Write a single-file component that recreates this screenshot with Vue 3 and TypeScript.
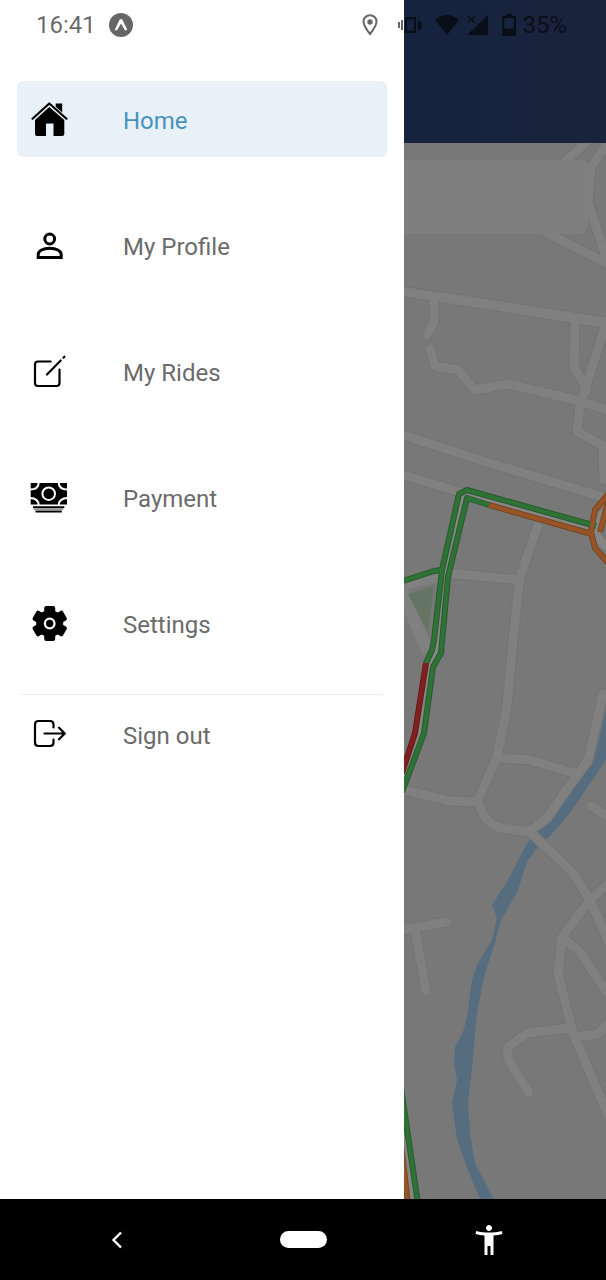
<script setup lang="ts">
import { ref } from 'vue'

type IconName = 'home' | 'profile' | 'rides' | 'payment' | 'settings'

interface MenuItem {
  icon: IconName
  label: string
}

const items: MenuItem[] = [
  { icon: 'home', label: 'Home' },
  { icon: 'profile', label: 'My Profile' },
  { icon: 'rides', label: 'My Rides' },
  { icon: 'payment', label: 'Payment' },
  { icon: 'settings', label: 'Settings' },
]

const active = ref<IconName>('home')

const roads: string[] = [
  'M592 137 560 166',
  'M610 140 591 167 588 202 607 260',
  'M545 232 610 265',
  'M400 291 610 324',
  'M434 297V322L427 335',
  'M430 349 435 366 458 370 475 390 508 384 580 401 610 411',
  'M575 322 574 367 587 390',
  'M605 327 588 380 580 405 577 431 603 446 604 480',
  'M400 434 483 461 606 498',
  'M400 474 460 492',
  'M538 525 520 577 513 640 507 707 497 757 478 800Q484 825 502 828L528 832',
  'M446 573 520 580',
  'M500 758 530 760 577 774',
  'M603 694 588 760 565 792 547 818 528 832',
  'M400 789 450 801 478 802',
  'M528 830 573 873 590 900 610 945',
  'M591 806 610 818',
  'M610 882 590 900 562 937 558 973 573 1033 610 1120',
  'M565 940 580 952 610 997',
  'M570 1028 527 1033 507 1048 509 1061 529 1093',
  'M577 1037 597 1034 610 1022',
  'M400 930 447 922',
  'M415 930 426 991',
]

const greens: string[] = [
  'M400 582 434 571 442 570',
  'M426 663 432 650 434 640 442 570 459 494 467 490 596 526',
  'M402 792 424 733 433 667 441 653 448 577 467 498 489 505',
  'M401 1088 418 1204',
]

const oranges: string[] = [
  'M489 505 592 534',
  'M610 492 595 510 591 532 595 548 610 565',
  'M608 502 600 532',
  'M400 1136 408 1204',
]
</script>

<template>
  <div class="phone">
    <main class="screen">
      <header class="status">
        <span class="clock">16:41</span>
        <svg class="expo" width="24" height="24" viewBox="0 0 24 24" aria-hidden="true">
          <path fill-rule="evenodd" d="M12 0a12 12 0 1 1 0 24a12 12 0 0 1 0-24zM10.700 6.500 6 16.200q.4 1.800 2.200.9L12 10.600l3.800 6.500q1.800.9 2.200-.9L13.300 6.500q-1.300-1-2.600 0z" />
        </svg>
        <span class="spacer"></span>
        <svg class="pin" width="16" height="22" viewBox="0 0 16 22" aria-hidden="true">
          <path d="M8 1.200c-3.700 0-6.500 2.800-6.500 6.400C1.500 12 8 20 8 20s6.500-8 6.500-12.400c0-3.600-2.800-6.400-6.500-6.400z" fill="none" stroke="currentColor" stroke-width="2" />
          <circle cx="8" cy="8" r="2.700" />
        </svg>
        <svg class="vibrate" width="24" height="20" viewBox="0 0 24 20" aria-hidden="true">
          <path fill-rule="evenodd" d="M7 2h11v16H7zM9 4.500v11h7v-11z" />
          <path d="M0 7h2v6H0zM3 5h2v10H3zM20 5h2v10h-2zM22 7h2v6h-2z" />
        </svg>
        <svg class="wifi" width="24" height="20" viewBox="0 0 24 20" aria-hidden="true">
          <path d="M12 20 0 5Q12-5 24 5z" />
        </svg>
        <svg class="signal" width="22" height="22" viewBox="0 0 22 22" aria-hidden="true">
          <path d="M22 1v20H1z" />
          <path d="m2 2 7 7M9 2 2 9" fill="none" stroke="currentColor" stroke-width="1.500" />
        </svg>
        <svg class="battery" width="14" height="22" viewBox="0 0 14 22" aria-hidden="true">
          <path fill-rule="evenodd" d="M4 0h6v2h3q1 0 1 1v18q0 1-1 1H1q-1 0-1-1V3q0-1 1-1h3zM2.300 4.300v10.200h9.400V4.300z" />
        </svg>
        <span class="charge">35%</span>
      </header>

      <nav class="drawer" aria-label="Main menu">
        <ul class="menu">
          <li v-for="item in items" :key="item.icon">
            <a href="#" class="row" :class="{ active: active === item.icon }" @click.prevent="active = item.icon">
              <svg class="icon" viewBox="0 0 38 38" aria-hidden="true">
                <g v-if="item.icon === 'home'">
                  <path d="M25.700 3.500h6.500v13l-6.500-5.500z" />
                  <path d="M2.500 19 19.300 3.700 36.500 19" class="halo" />
                  <path d="M2.500 18.700 19.300 3.500 36.500 18.700" class="line roof" />
                  <path d="M5 20 19.300 7 34.300 20V34q0 2-2 2H23.500V23.500h-7.500V36H7q-2 0-2-2z" />
                </g>
                <g v-else-if="item.icon === 'profile'" class="line heavy">
                  <circle cx="19.700" cy="13" r="4.900" />
                  <path d="M8.200 31.500V28.500c0-3.600 5-6.200 11.500-6.200s11.500 2.600 11.500 6.200v3z" />
                </g>
                <g v-else-if="item.icon === 'rides'" class="line">
                  <path d="M20.700 9.500H8q-3 0-3 3V31q0 3 3 3H26.500q3 0 3-3V17.500M17 22.500 30.700 8.500M33.400 5.700l1-1" />
                </g>
                <g v-else-if="item.icon === 'payment'">
                  <path d="M.7 5H37V26.500H.7zM3 28.300h31.300v2H3zM5.500 32.400h26.300v2H5.500z" />
                  <path d="M4 30.300h29v2H4z" fill="#999" />
                  <g fill="none" stroke="#fff" stroke-width="2">
                    <circle cx="18.700" cy="15.700" r="6.300" />
                    <path d="M8.700 4.500q0 7-8.700 7M28.700 4.500q0 7 9 7M0 20q8.700 0 8.700 7.500M38 20q-9.300 0-9.300 7.500" />
                  </g>
                </g>
                <g v-else>
                  <circle cx="19.700" cy="19.500" r="13.500" />
                  <rect v-for="turn in [0, 60, 120]" :key="turn" x="14.200" y="2" width="11" height="35" rx="2" :transform="`rotate(${turn} 19.700 19.500)`" />
                  <circle cx="19.700" cy="19.500" r="4.800" fill="none" stroke="#fff" stroke-width="2.200" />
                </g>
              </svg>
              <span class="label">{{ item.label }}</span>
            </a>
          </li>
        </ul>
        <hr class="divider" />
        <button type="button" class="row">
          <svg class="icon" viewBox="0 0 38 38" aria-hidden="true">
            <path class="line" d="M23.500 12.500V9.500q0-3.500-3.500-3.500H8.500Q5 6 5 9.500V27.500Q5 31 8.500 31H20q3.500 0 3.500-3.500V24.500M14.500 18.500H34.500M29 12.700l5.800 5.800L29 24.300" />
          </svg>
          <span class="label">Sign out</span>
        </button>
      </nav>

      <section class="backdrop" aria-label="Map">
        <div class="topbar"></div>
        <svg class="map" viewBox="404 143 202 1056" preserveAspectRatio="xMinYMin slice" aria-hidden="true">
          <path class="river" d="M606 710 593 763 537 832 527 843 508 880 492 905 497 918 492 940 478 963 472 980 467 1017 463 1032 455 1047 454 1063 457 1080 452 1103 457 1140 468 1170 482 1204H496L475 1163 470 1133 468 1103 472 1067 477 1013 485 973 495 943 500 923 518 890 527 862 537 848 551 835 570 813 606 760z" />
          <path class="casing thin" d="M400 286 610 318" />
          <path v-for="d in roads" :key="'c' + d" class="casing" :d="d" />
          <path v-for="d in roads" :key="d" class="road" :d="d" />
          <path class="road thin" d="M440 293 610 319" />
          <path class="plaza" d="M404 160H584Q591 164 591 172V205Q589 234 580 234H404z" />
          <g class="avenue">
            <path d="M402 584 440 576M402 592 428 652" class="side" />
            <path d="M402 780 419 733 430 663 437 648 445 573 463 494 595 530" />
            <path d="M401 1112 413 1204" />
            <circle cx="615" cy="529" r="19" />
          </g>
          <path class="park" d="M408 594 434 586 428 633z" />
          <g class="lane-edge green-edge"><path v-for="d in greens" :key="d" :d="d" /></g>
          <g class="lane-edge orange-edge"><path v-for="d in oranges" :key="d" :d="d" /></g>
          <g class="lane green"><path v-for="d in greens" :key="d" :d="d" /></g>
          <g class="lane orange"><path v-for="d in oranges" :key="d" :d="d" /></g>
          <path class="lane-edge red-edge" d="M426 663 415 733 402 773" />
          <path class="lane red" d="M426 663 415 733 402 773" />
        </svg>
      </section>
    </main>

    <footer class="navbar">
      <button type="button" aria-label="Back">
        <svg width="16" height="20" viewBox="0 0 16 20"><path d="M12 2.500 4.500 10l7.500 7.500" fill="none" stroke="#fff" stroke-width="2.400" /></svg>
      </button>
      <button type="button" aria-label="Home screen"><span class="pill"></span></button>
      <button type="button" aria-label="Accessibility">
        <svg width="36" height="36" viewBox="0 0 24 24" fill="#fff">
          <path d="M20.500 6c-2.610.7-5.670 1-8.500 1s-5.890-.3-8.500-1L3 8c1.860.5 4 .83 6 1v13h2v-6h2v6h2V9c2-.17 4.140-.5 6-1zM12 6c1.100 0 2-.9 2-2s-.9-2-2-2-2 .9-2 2 .9 2 2 2z" />
        </svg>
      </button>
    </footer>
  </div>
</template>

<style>
body {
  margin: 0;
}
</style>

<style scoped>
.phone {
  display: flex;
  flex-direction: column;
  min-height: 100vh;
  font-family: Roboto, "Liberation Sans", sans-serif;
  background: #000;
}

.screen {
  position: relative;
  flex: 1;
  display: grid;
  grid-template-columns: 2fr 1fr;
}

.status {
  position: absolute;
  z-index: 1;
  top: 0;
  left: 0;
  right: 0;
  display: flex;
  align-items: center;
  height: 50px;
  padding: 0 39px 0 36px;
  color: rgba(0, 0, 0, 0.6);
  font-size: 24px;
  line-height: 32px;
}

.status svg {
  flex: none;
  fill: currentColor;
}

.expo {
  margin-left: 13px;
}

.spacer {
  flex: 1;
}

.pin {
  margin-right: 20px;
}

.vibrate {
  margin-right: 13px;
}

.wifi {
  margin-right: 7px;
}

.signal {
  margin-right: 14px;
}

.battery {
  margin-right: 6px;
}

.drawer {
  box-sizing: border-box;
  padding: 81px 17px 24px;
  background: #fff;
}

.menu {
  display: flex;
  flex-direction: column;
  gap: 50px;
  margin: 0;
  padding: 0;
  list-style: none;
}

.row {
  box-sizing: border-box;
  display: flex;
  align-items: center;
  gap: 55px;
  width: 100%;
  height: 76px;
  padding: 0 13px;
  border: 0;
  border-radius: 6px;
  background: none;
  color: #6b6b6b;
  font: 24px/32px Roboto, "Liberation Sans", sans-serif;
  text-align: left;
  text-decoration: none;
  cursor: pointer;
}

.row.active {
  background: #e8f1f7;
  color: #4893bd;
}

.label {
  padding-top: 3px;
}

.icon {
  flex: none;
  width: 38px;
  height: 38px;
  fill: #000;
}

.icon .line {
  fill: none;
  stroke: #000;
  stroke-width: 2.2;
  stroke-linecap: round;
  stroke-linejoin: round;
}

.icon .heavy {
  stroke-width: 3;
  stroke-linejoin: miter;
}

.icon .halo {
  fill: none;
  stroke: #e8f1f7;
  stroke-width: 4;
}

.divider {
  height: 1px;
  margin: 33px 4px 1px;
  border: 0;
  background: #ececec;
}

.backdrop {
  display: flex;
  flex-direction: column;
  min-width: 0;
}

.topbar {
  flex: none;
  height: 143px;
  background: linear-gradient(90deg, #16233e, #1a233c);
}

.map {
  flex: 1;
  width: 100%;
  min-height: 0;
  background: #787878;
}

.map path,
.map circle {
  fill: none;
  stroke-linejoin: round;
}

.map .river {
  fill: #566d80;
}

.map .casing {
  stroke: #737373;
  stroke-width: 11;
  stroke-linecap: round;
}

.map .road {
  stroke: #808080;
  stroke-width: 9;
  stroke-linecap: round;
}

.map .thin {
  stroke-width: 2;
}

.map .plaza {
  fill: #7f7f7f;
}

.avenue {
  stroke: #868686;
  stroke-width: 8;
}

.avenue .side {
  stroke: #808080;
  stroke-width: 12;
}

.map .park {
  fill: #647663;
}

.lane {
  stroke-width: 4;
}

.lane-edge {
  stroke-width: 6;
}

.green {
  stroke: #2f7236;
}

.green-edge {
  stroke: #285a2d;
}

.orange {
  stroke: #985426;
}

.orange-edge {
  stroke: #764522;
}

.map .red {
  stroke: #82201d;
}

.map .red-edge {
  stroke: #641b19;
}

.navbar {
  display: grid;
  grid-template-columns: repeat(3, 1fr);
  height: 81px;
  padding: 0 24px;
  background: #000;
}

.navbar button {
  display: flex;
  align-items: center;
  justify-content: center;
  padding: 0;
  border: 0;
  background: none;
  cursor: pointer;
}

.pill {
  width: 47px;
  height: 17px;
  border-radius: 9px;
  background: #fff;
}
</style>
